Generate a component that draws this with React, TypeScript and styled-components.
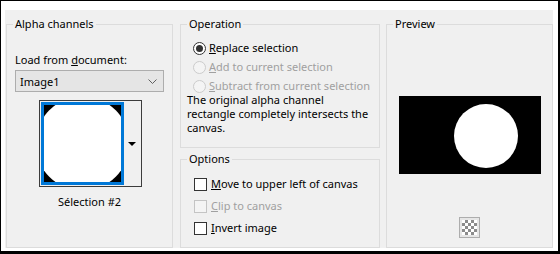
import { FC, ReactNode } from 'react';
import styled, { createGlobalStyle } from 'styled-components';

const GlobalStyle = createGlobalStyle`
  html, body { margin: 0; padding: 0; background: #fff; }
  body {
    font-family: "Noto Sans", "Segoe UI", sans-serif;
    font-size: 11px;
    color: #000;
  }
`;

const Frame = styled.div`
  box-sizing: border-box;
  width: 560px;
  height: 254px;
  border-style: solid;
  border-color: #000;
  border-width: 1px 2px 3px 1px;
  background: #fff;
  padding: 9px 5px 3px 4px;
`;

const Panel = styled.div`
  box-sizing: border-box;
  height: 238px;
  background: #f0f0f0;
  display: flex;
  align-items: flex-start;
  padding: 6px 0 0 1px;
`;

const Group = styled.fieldset<{ $w: number; $h: number }>`
  box-sizing: border-box;
  width: ${(p) => p.$w}px;
  height: ${(p) => p.$h}px;
  margin: 0;
  padding: 0 8px;
  border: 1px solid #dcdcdc;
  display: flex;
  flex-direction: column;
  min-width: 0;
`;

const Legend = styled.legend`
  padding: 0 2px;
  margin-left: -2px;
  line-height: 16px;
`;

const Column = styled.div`
  display: flex;
  flex-direction: column;
  gap: 3px;
  margin: 0 6px 0 7px;
`;

/* alpha channels */
const Label = styled.div`
  margin-top: 20px;
  line-height: 16px;
`;

const Select = styled.div`
  box-sizing: border-box;
  margin-top: 2px;
  height: 22px;
  border: 1px solid #adadad;
  background: #e5e5e5;
  display: flex;
  align-items: center;
  justify-content: space-between;
  padding: 0 6px 0 4px;
`;

const ThumbButton = styled.div`
  align-self: center;
  margin: 8px 0 0 1px;
  display: flex;
  border: 1px solid #3c3c3c;
  background: #f0f0f0;
  padding: 1px 0 1px 1px;
`;

const Swatch = styled.div`
  width: 77px;
  height: 77px;
  border: 3px solid #0078d7;
  line-height: 0;
`;

const ThumbArrow = styled.div`
  width: 17px;
  display: flex;
  align-items: center;
  justify-content: center;
`;

const Caption = styled.div`
  margin-top: 7px;
  line-height: 16px;
  text-align: center;
`;

/* operation / options */
const OptionList = styled.div<{ $top: number; $gap: number }>`
  display: flex;
  flex-direction: column;
  gap: ${(p) => p.$gap}px;
  margin-top: ${(p) => p.$top}px;
`;

const OptionRow = styled.div<{ $off?: boolean; $indent: number }>`
  display: flex;
  align-items: flex-start;
  line-height: 15px;
  white-space: nowrap;
  padding-left: ${(p) => p.$indent}px;
  color: ${(p) => (p.$off ? '#a0a0a0' : '#000')};
`;

const Radio = styled.span<{ $on?: boolean; $off?: boolean }>`
  box-sizing: border-box;
  flex: none;
  width: 13px;
  height: 13px;
  margin: 2px 3px 0 0;
  border-radius: 50%;
  border: 1px solid ${(p) => (p.$off ? '#cccccc' : '#333')};
  background: ${(p) => (p.$off ? '#f4f4f4' : '#fff')};
  display: flex;
  align-items: center;
  justify-content: center;
  &::after {
    content: '';
    display: ${(p) => (p.$on ? 'block' : 'none')};
    width: 7px;
    height: 7px;
    border-radius: 50%;
    background: #333;
  }
`;

const Check = styled.span<{ $off?: boolean }>`
  box-sizing: border-box;
  flex: none;
  width: 13px;
  height: 13px;
  margin: 2px 4px 0 0;
  border: 1px solid ${(p) => (p.$off ? '#c4c4c4' : '#333')};
  background: ${(p) => (p.$off ? '#f4f4f4' : '#fff')};
`;

const Note = styled.div`
  margin-left: -2px;
  line-height: 14px;
  white-space: nowrap;
`;

/* preview */
const PreviewBox = styled.div`
  align-self: center;
  margin-top: 64px;
  line-height: 0;
`;

const CheckerButton = styled.div`
  align-self: center;
  margin-top: 43px;
  box-sizing: border-box;
  width: 21px;
  height: 21px;
  border: 1px solid #adadad;
  background: #e6e6e6;
  padding: 2px;
`;

const Checker = styled.div`
  width: 15px;
  height: 15px;
  background: repeating-conic-gradient(#8c8c8c 0 25%, #ffffff 0 50%) 0 0 / 6px 6px;
`;

const Opt: FC<{ kind: 'radio' | 'check'; on?: boolean; off?: boolean; indent: number; children: ReactNode }> = ({
  kind,
  on,
  off,
  indent,
  children,
}) => (
  <OptionRow $off={off} $indent={indent}>
    {kind === 'radio' ? <Radio $on={on} $off={off} /> : <Check $off={off} />}
    <span>{children}</span>
  </OptionRow>
);

const App: FC = () => {
  return (
    <Frame>
      <GlobalStyle />
      <Panel>
        <Group $w={167} $h={232}>
          <Legend>Alpha channels</Legend>
          <Label>
            Load from <u>d</u>ocument:
          </Label>
          <Select>
            <span>Image1</span>
            <svg width="9" height="5" viewBox="0 0 9 5">
              <polyline points="0.5,0.5 4.5,4.5 8.5,0.5" fill="none" stroke="#606060" strokeWidth="1" />
            </svg>
          </Select>
          <ThumbButton>
            <Swatch>
              <svg width="77" height="77" viewBox="0 0 77 77">
                <rect width="77" height="77" fill="#000" />
                <circle cx="38.5" cy="38.5" r="47" fill="#fff" />
              </svg>
            </Swatch>
            <ThumbArrow>
              <svg width="8" height="4" viewBox="0 0 8 4">
                <polygon points="0,0 8,0 4,4" fill="#000" />
              </svg>
            </ThumbArrow>
          </ThumbButton>
          <Caption>Sélection #2</Caption>
        </Group>

        <Column>
          <Group $w={200} $h={132}>
            <Legend>Operation</Legend>
            <OptionList $top={8} $gap={4}>
              <Opt kind="radio" on indent={4}>
                <u>R</u>eplace selection
              </Opt>
              <Opt kind="radio" off indent={4}>
                <u>A</u>dd to current selection
              </Opt>
              <Opt kind="radio" off indent={4}>
                <u>S</u>ubtract from current selection
              </Opt>
            </OptionList>
            <Note>
              The original alpha channel
              <br />
              rectangle completely intersects the
              <br />
              canvas.
            </Note>
          </Group>
          <Group $w={200} $h={97}>
            <Legend>Options</Legend>
            <OptionList $top={9} $gap={7}>
              <Opt kind="check" indent={5}>
                <u>M</u>ove to upper left of canvas
              </Opt>
              <Opt kind="check" off indent={5}>
                <u>C</u>lip to canvas
              </Opt>
              <Opt kind="check" indent={5}>
                <u>I</u>nvert image
              </Opt>
            </OptionList>
          </Group>
        </Column>

        <Group $w={167} $h={232}>
          <Legend>Preview</Legend>
          <PreviewBox>
            <svg width="142" height="78" viewBox="0 0 142 78">
              <rect width="142" height="78" fill="#000" />
              <circle cx="87" cy="40" r="32" fill="#fff" />
            </svg>
          </PreviewBox>
          <CheckerButton>
            <Checker />
          </CheckerButton>
        </Group>
      </Panel>
    </Frame>
  );
};

export default App;
